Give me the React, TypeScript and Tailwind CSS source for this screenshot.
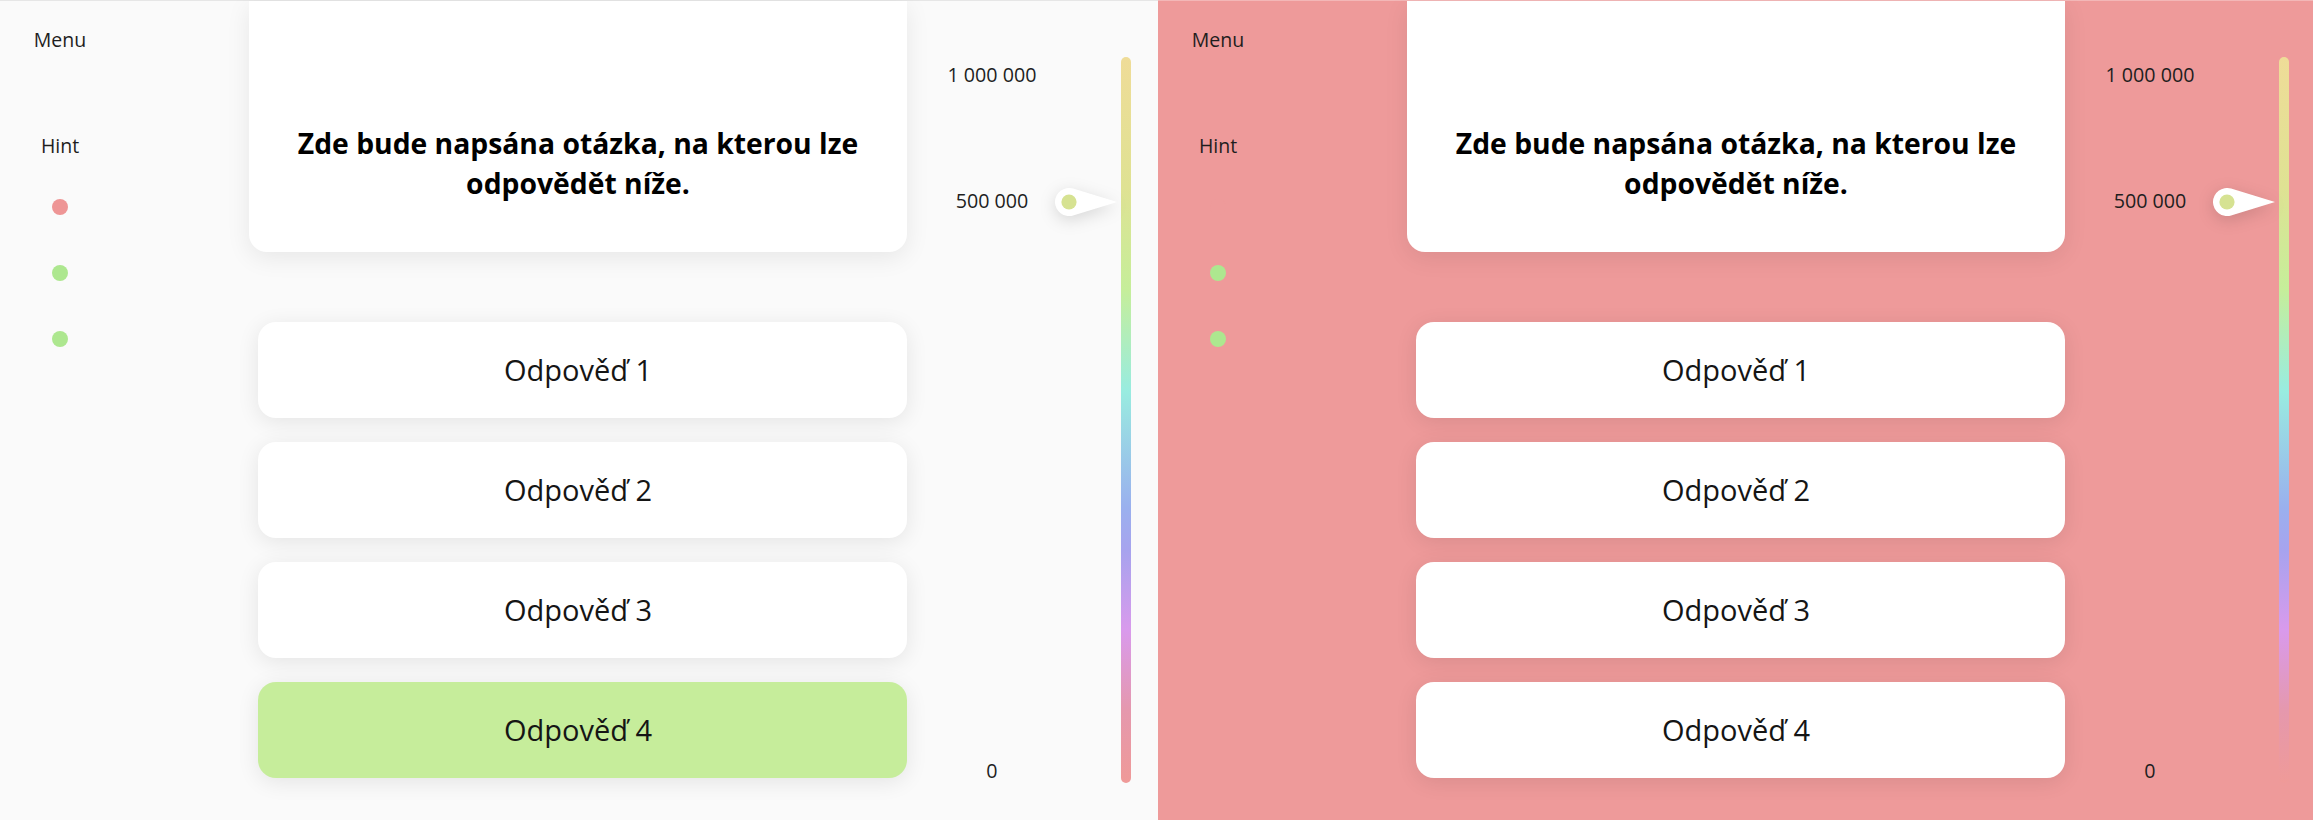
const ANSWERS = ["Odpověď 1", "Odpověď 2", "Odpověď 3", "Odpověď 4"];

type PanelProps = {
  className: string;
  firstDot: string;
  highlight: boolean;
};

const Pin = () => (
  <svg
    className="absolute left-[123px] top-[187px] drop-shadow-[0_4px_8px_rgba(0,0,0,0.14)]"
    width="62"
    height="28"
    viewBox="0 0 62 28"
  >
    <path d="M18.08 0.61 L62 14 L18.08 27.39 A14 14 0 1 1 18.08 0.61 Z" fill="#ffffff" />
    <circle cx="14" cy="14" r="7.6" fill="#d6e292" />
  </svg>
);

const Panel: React.FC<PanelProps> = ({ className, firstDot, highlight }) => {
  const renderAnswer = (label: string, i: number) => (
    <div
      key={label}
      className={`h-[96px] flex items-center justify-center pr-[9px] rounded-[18px] text-[29px] text-[#151515] shadow-[0_4px_22px_rgba(0,0,0,0.09)] ${
        highlight && i === 3 ? "bg-[#c6ed9b]" : "bg-white"
      }`}
    >
      {label}
    </div>
  );

  return (
    <div className={`h-[820px] flex flex-row border-t ${className}`}>
      <div className="w-[120px] flex flex-col items-center text-[19.5px] text-[#1e1e1e]">
        <span className="mt-[26px] leading-[26px]">Menu</span>
        <span className="mt-[80px] leading-[26px]">Hint</span>
        <div className="mt-[40px] flex flex-col items-center gap-[50px]">
          <span className={`size-[16px] rounded-full ${firstDot}`} />
          <span className="size-[16px] rounded-full bg-[#ade78f]" />
          <span className="size-[16px] rounded-full bg-[#ade78f]" />
        </div>
      </div>

      <div className="ml-[129px] w-[658px] flex flex-col">
        <div className="h-[251px] bg-white rounded-b-[18px] shadow-[0_6px_24px_rgba(0,0,0,0.08)] flex items-center justify-center pt-[72px] px-[40px]">
          <p className="text-[28.3px] font-bold leading-[40px] text-center text-black">
            Zde bude napsána otázka, na kterou lze
            <br />
            odpovědět níže.
          </p>
        </div>
        <div className="mt-[70px] pl-[9px] flex flex-col gap-[24px]">
          {ANSWERS.map(renderAnswer)}
        </div>
      </div>

      <div className="relative ml-[25px] flex flex-row">
        <div className="w-[120px] flex flex-col items-center text-[19.7px] leading-[26px] text-[#1e1e1e]">
          <span className="mt-[61px]">1 000 000</span>
          <span className="mt-[100px]">500 000</span>
          <span className="mt-[544px]">0</span>
        </div>
        <div className="ml-[69px] mt-[56px] w-[10px] h-[726px] rounded-full bg-[linear-gradient(to_bottom,#efdc98_0%,#dfe293_18%,#c6ee9a_32%,#99ece0_46%,#9ab0ee_62%,#a7a3ee_68%,#d99aec_79%,#e598ad_90%,#ef9a98_100%)]" />
        <Pin />
      </div>
    </div>
  );
};

export default function App() {
  return (
    <div className="flex flex-row w-[2313px] h-[820px] overflow-hidden font-['Open_Sans',sans-serif]">
      <Panel
        className="w-[1158px] shrink-0 bg-[#fafafa] border-[#e6e6e6]"
        firstDot="bg-[#ee9595]"
        highlight
      />
      <Panel
        className="flex-1 bg-[#ee9a9a] border-[#f3b7b7]"
        firstDot="bg-[#ee9a9a]"
        highlight={false}
      />
    </div>
  );
}
